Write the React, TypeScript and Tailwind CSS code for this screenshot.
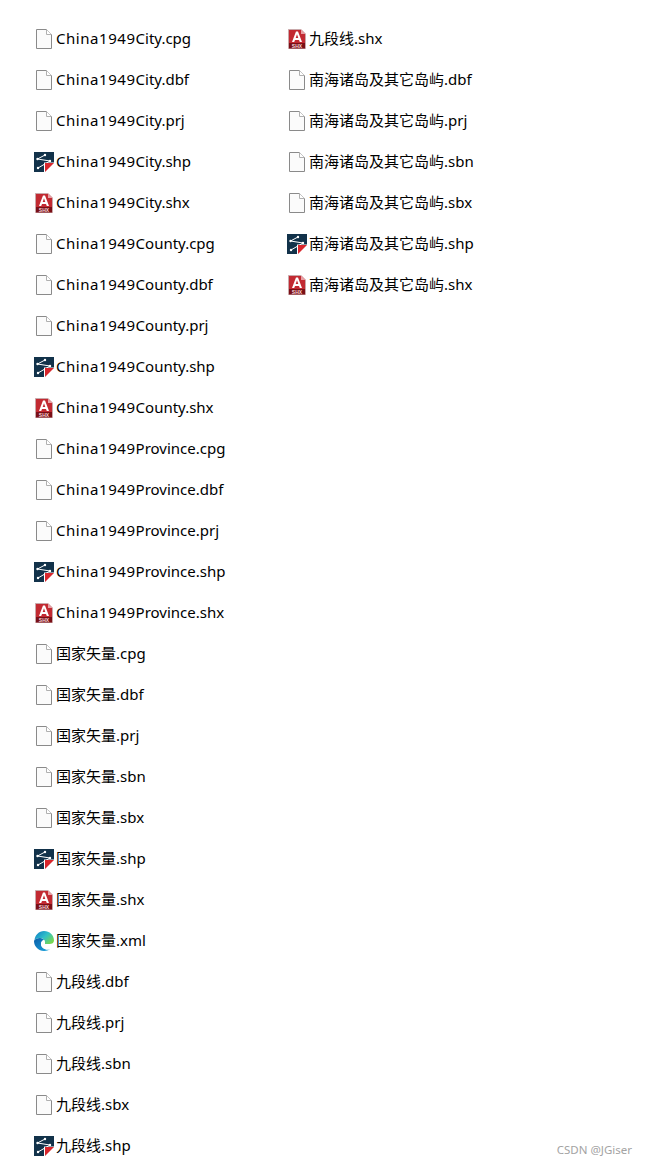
const Blank = () => (
  <svg width="16" height="20" viewBox="0 0 16 20" className="shrink-0">
    <path d="M0.5 0.5H10.5L15.5 5.5V19.5H0.5Z" fill="#fbfbfb" stroke="#8a8a8a" />
    <path d="M10.5 0.5V5.5H15.5" fill="#ffffff" stroke="#b0b0b0" />
  </svg>
);

const Shp = () => (
  <svg width="20" height="20" viewBox="0 0 20 20" className="shrink-0">
    <rect width="20" height="20" fill="#12324a" />
    <path d="M11 3L3.500 7L16 9L4 16" fill="none" stroke="#ffffff" strokeWidth="1" />
    <circle cx="3.5" cy="7" r="1.2" fill="#fff" />
    <circle cx="11" cy="3" r="1.2" fill="#fff" />
    <circle cx="16" cy="9" r="1.2" fill="#fff" />
    <circle cx="4" cy="16" r="1.2" fill="#fff" />
    <path d="M10 10.500H20V20H10Z" fill="#ffffff" />
    <path d="M11 11H20L11 20Z" fill="#d8262c" />
  </svg>
);

const Shx = () => (
  <svg width="18" height="20" viewBox="0 0 18 20" className="shrink-0">
    <path d="M0.5 0.5H13L17.500 5V19.5H0.5Z" fill="#c22a32" stroke="#c9a9ab" />
    <path d="M13 0.5V5H17.500" fill="#e8a0a4" />
    <rect x="1" y="14" width="16" height="5.5" fill="#7a0f16" />
    <path d="M4 13L8 2.500H10L14 13H11.800L11 11H7L6.200 13Z M7.700 9H10.300L9 5.200Z" fill="#ffffff" fillRule="evenodd" />
    <text x="9" y="18.600" textAnchor="middle" fontSize="5" fontWeight="700" fill="#f2d6d8" fontFamily="'Liberation Sans',sans-serif">SHX</text>
  </svg>
);

const Edge = () => (
  <svg width="20" height="20" viewBox="0 0 20 20" className="shrink-0">
    <defs>
      <linearGradient id="edgeTop" x1="0" y1="0" x2="1" y2="0.7">
        <stop offset="0" stopColor="#0c78c8" />
        <stop offset="0.55" stopColor="#30c0c8" />
        <stop offset="1" stopColor="#78d850" />
      </linearGradient>
      <linearGradient id="edgeLow" x1="0" y1="0" x2="1" y2="1">
        <stop offset="0" stopColor="#0a5ea8" />
        <stop offset="1" stopColor="#1aa8e0" />
      </linearGradient>
    </defs>
    <path d="M0.5 9C1 4 5 0 10 0C15.500 0 20 4 20 9.500C20 12 18 13 15.500 13H11C11.500 9 9 7 6 7C3.500 7 1.500 8 0.500 9Z" fill="url(#edgeTop)" />
    <path d="M0.5 9C1.500 8 3.500 7 6 7C8 7 9.500 8 10 9C8 9.500 7 11 7 13C7 16 10 18.500 13.500 18.500C15 18.500 16.500 18 17.500 17C15.500 19 13 20 10 20C4.500 20 0 15.500 0 10Z" fill="url(#edgeLow)" />
    <path d="M7 13C7 11 8 9.500 10 9C10.700 10 11 11.500 11 13H15.500C14.500 13 12 13.500 12 15C12 16.500 14.500 17.500 17.500 17C16.500 18 15 18.500 13.500 18.500C10 18.500 7 16 7 13Z" fill="#ffffff" />
  </svg>
);

type Kind = "blank" | "shp" | "shx" | "edge";

const icons: Record<Kind, () => React.ReactElement> = { blank: Blank, shp: Shp, shx: Shx, edge: Edge };

const col1: [string, Kind][] = [
  ["China1949City.cpg", "blank"],
  ["China1949City.dbf", "blank"],
  ["China1949City.prj", "blank"],
  ["China1949City.shp", "shp"],
  ["China1949City.shx", "shx"],
  ["China1949County.cpg", "blank"],
  ["China1949County.dbf", "blank"],
  ["China1949County.prj", "blank"],
  ["China1949County.shp", "shp"],
  ["China1949County.shx", "shx"],
  ["China1949Province.cpg", "blank"],
  ["China1949Province.dbf", "blank"],
  ["China1949Province.prj", "blank"],
  ["China1949Province.shp", "shp"],
  ["China1949Province.shx", "shx"],
  ["国家矢量.cpg", "blank"],
  ["国家矢量.dbf", "blank"],
  ["国家矢量.prj", "blank"],
  ["国家矢量.sbn", "blank"],
  ["国家矢量.sbx", "blank"],
  ["国家矢量.shp", "shp"],
  ["国家矢量.shx", "shx"],
  ["国家矢量.xml", "edge"],
  ["九段线.dbf", "blank"],
  ["九段线.prj", "blank"],
  ["九段线.sbn", "blank"],
  ["九段线.sbx", "blank"],
  ["九段线.shp", "shp"],
];

const col2: [string, Kind][] = [
  ["九段线.shx", "shx"],
  ["南海诸岛及其它岛屿.dbf", "blank"],
  ["南海诸岛及其它岛屿.prj", "blank"],
  ["南海诸岛及其它岛屿.sbn", "blank"],
  ["南海诸岛及其它岛屿.sbx", "blank"],
  ["南海诸岛及其它岛屿.shp", "shp"],
  ["南海诸岛及其它岛屿.shx", "shx"],
];

const Row = ({ name, kind }: { name: string; kind: Kind }) => {
  const Icon = icons[kind];
  const hasPrefix = name.startsWith("China1949");
  return (
    <div className="flex h-[41px] items-center">
      <div className="flex w-[22px] shrink-0 justify-center pr-[2px]">
        <Icon />
      </div>
      <span className="whitespace-nowrap text-[15px] leading-none text-black">
        {hasPrefix ? (
          <>
            <span className="tracking-[0.55px]">China1949</span>
            {name.slice(9)}
          </>
        ) : (
          name
        )}
      </span>
    </div>
  );
};

export default function App() {
  return (
    <div className="relative h-[1164px] w-[647px] overflow-hidden bg-white font-['Noto_Sans','Noto_Sans_CJK_SC',sans-serif]">
      <div className="flex pl-[34px] pt-[18px]">
        <div className="w-[253px]">
          {col1.map(([n, k]) => (
            <Row key={n} name={n} kind={k} />
          ))}
        </div>
        <div>
          {col2.map(([n, k]) => (
            <Row key={n} name={n} kind={k} />
          ))}
        </div>
      </div>
      <div className="absolute right-[15px] top-[1143px] text-[11.500px] leading-[14px] text-[#a3a3a3]">CSDN @JGiser</div>
    </div>
  );
}
